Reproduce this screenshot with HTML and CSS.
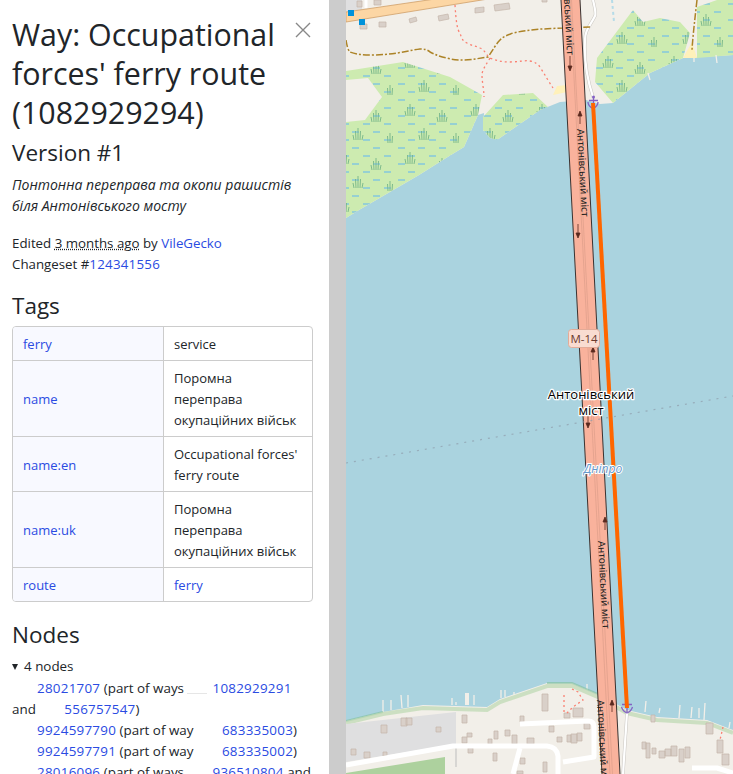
FILE: index.html
```html
<!DOCTYPE html>
<html lang="en">
<head>
<meta charset="utf-8">
<title>Way: Occupational forces' ferry route</title>
<link rel="stylesheet" href="styles.css">
</head>
<body>
<div class="app">
  <aside class="sidebar">
    <header class="head">
      <h1 class="title">Way: Occupational forces' ferry route (1082929294)</h1>
      <button class="close" aria-label="Close">
        <svg width="16" height="16" viewBox="0 0 16 16"><path d="M1 1l14 14M15 1L1 15"/></svg>
      </button>
    </header>
    <h2 class="version">Version #1</h2>
    <p class="comment">Понтонна переправа та окопи рашистів біля Антонівського мосту</p>
    <p class="meta">Edited <abbr class="ago">3 months ago</abbr> by <a href="#">VileGecko</a><br>Changeset #<a class="num" href="#">124341556</a></p>
    <h2 class="section">Tags</h2>
    <table class="tags">
      <tr><th><a href="#">ferry</a></th><td>service</td></tr>
      <tr><th><a href="#">name</a></th><td>Поромна переправа окупаційних військ</td></tr>
      <tr><th><a href="#">name:en</a></th><td>Occupational forces' ferry route</td></tr>
      <tr><th><a href="#">name:uk</a></th><td>Поромна переправа окупаційних військ</td></tr>
      <tr><th><a href="#">route</a></th><td><a href="#">ferry</a></td></tr>
    </table>
    <h2 class="section nodes-h">Nodes</h2>
    <div class="summary"><span class="caret"></span>4 nodes</div>
    <ul class="nodes">
      <li><i class="gap"></i><a class="num" href="#">28021707</a> (part of ways <i class="gap line"></i><a class="num" href="#">1082929291</a> and <i class="gap"></i><a class="num" href="#">556757547</a>)</li>
      <li><i class="gap"></i><a class="num" href="#">9924597790</a> (part of way <i class="gap"></i><a class="num" href="#">683335003</a>)</li>
      <li><i class="gap"></i><a class="num" href="#">9924597791</a> (part of way <i class="gap"></i><a class="num" href="#">683335002</a>)</li>
      <li><i class="gap"></i><a class="num" href="#">28016096</a> (part of ways <i class="gap"></i><a class="num" href="#">936510804</a> and</li>
    </ul>
  </aside>
  <div class="divider"></div>
  <main class="map">
    <svg class="map-svg" viewBox="346 0 387 774" width="387" height="774" aria-label="Map">
      <defs>
        <pattern id="wet" patternUnits="userSpaceOnUse" width="66" height="48">
          <rect width="66" height="48" fill="#cdebb0"/>
          <g class="wet-dash">
            <path d="M2 4h7M22 4h7M43 4h7M12 12h7M33 12h7M54 12h7M2 20h7M22 20h7M43 20h7M12 28h7M33 28h7M54 28h7M2 36h7M22 36h7M43 36h7M12 44h7M33 44h7M54 44h7"/>
          </g>
          <g class="wet-reed">
            <path d="M14 20v-12M12 20l-.5-9M16 20l.5-9M10 20l-1-5M18 20l1-5"/>
            <path d="M46 26v-12M44 26l-.5-9M48 26l.5-9M42 26l-1-5M50 26l1-5"/>
            <path d="M28 44v-12M26 44l-.5-9M30 44l.5-9M24 44l-1-5M32 44l1-5"/>
            <path d="M60 47v-10M58 47l-.5-7M62 47l.5-7"/>
          </g>
        </pattern>
      </defs>

      <rect class="land" x="346" y="0" width="387" height="774"/>
      <path class="water" d="M346 218L359 210L419 175L446 158L464 147L478 115L484 113L483 130L490 138L497 140L540 110L560 102L586 100L600 104L613 103L650 73L683 58L733 55V730L707 720L657 717L627 710L600 695L572 683L547 683L500 699L487 707L423 705L383 712L346 721Z"/>

      <path class="wetland" d="M346 71L403 62L450 77L482 95L478 115L464 147L446 158L419 175L359 210L346 218Z"/>
      <path class="land" d="M346 80L368 78L382 97L365 120L346 122Z"/>
      <path class="wetland" d="M483 117L503 95L533 93L548 107L540 110L497 140L490 138L483 130Z"/>
      <path class="wetland" d="M597 58L633 10L643 22L660 18L680 22L690 33L683 58L650 73L613 103L595 82Z"/>
      <path class="wetland" d="M697 7L717 0H733V55L697 58Z"/>
      <path class="beach" d="M683 58L692 42L697 58ZM553 95L557 86L567 85V92Z"/>

      <g class="pier">
        <path d="M648 73l2 7M694 58v4M716 55l1 8M383 700v12M391 700v10M401 695l1 13M408 695v12M452 698v7M456 702v3M474 695v10M501 690v8M505 690v7M514 692v3M587 684v6M646 701l-1 11M660 708l-1 5M680 705l-1 13M692 707l-1 11M699 708v10M705 703l-1 17M730 722l-1 6"/>
        <path class="pier-thick" d="M467 693v12"/>
      </g>

      <path class="tint" d="M346 721L383 712M547 683L572 683L600 695"/>
      <path class="strand" d="M346 723L383 714L423 708L487 710L500 702L547 686L572 686L600 698L627 713L657 720L707 723L733 733"/>

      <path class="gray" d="M346 724L456 712V744L346 762Z"/>
      <path class="gray-line" d="M456 748V767"/>
      <path class="park" d="M346 773L445 757V774H346Z"/>

      <rect class="gray" x="346" y="0" width="16" height="12"/>
      <path class="road-white" d="M366 0V8"/>

      <g class="bldg">
        <path d="M357 1h5v6h-5ZM374 0h7v5h-7ZM360 24h7v5h-7ZM379 22h7v5h-7ZM409 19l7-2 1 4-7 2ZM438 16l10-2 1 5-10 2ZM475 8l9-1 0 5-9 1ZM494 5l15-2 1 6-15 2ZM542 -2h5v4h-5Z"/>
        <path d="M381 725h6v8h-6ZM401 718h6v8h-6ZM406 718h6v7h-6ZM436 727h5v5h-5ZM462 715h5v8h-5ZM520 716h4v6h-4ZM542 694h6v17h-6ZM564 713h6v5h-6ZM573 708h10v9h-10ZM549 726h5v6h-5ZM584 723h6v6h-6ZM467 733h5v4h-5ZM462 737h5v6h-5ZM494 731h4v8h-4ZM488 739h4v5h-4ZM505 730h5v6h-5ZM512 735h5v9h-5ZM527 738h7v6h-7ZM557 737h5v5h-5ZM567 735h4v7h-4ZM571 734h6v9h-6ZM577 733h5v8h-5ZM351 749h5v6h-5ZM364 752h6v6h-6ZM383 752h4v4h-4ZM468 748h5v5h-5ZM493 753h4v8h-4ZM520 758h5v6h-5ZM543 762h4v10h-4ZM517 771h6v3h-6ZM642 742h4v7h-4ZM646 743h4v15h-4ZM652 748h4v6h-4ZM659 751h6v7h-6ZM665 749h6v7h-6ZM671 746h6v10h-6ZM679 749h5v13h-5ZM685 747h5v11h-5ZM706 723h7v11h-7ZM717 740h6v13h-6ZM722 754h7v11h-7ZM651 715h4v7h-4Z"/>
      </g>

      <g class="road-white">
        <path d="M346 765L453 746H547Q557 747 558 756V774"/>
        <path d="M520 748L513 774"/>
        <path d="M520 724L588 721Q594 721 594 727V757L563 762"/>
        <path d="M692 768H717L733 773"/>
      </g>
      <path class="walk-edge" d="M627 713L623 774"/>
      <path class="walk" d="M627 713L623 774"/>
      <path class="walk-edge" d="M593 0C595 8 596 14 595 16C590 26 585 30 585 40C584 60 586 76 593 97"/>
      <path class="walk" d="M593 0C595 8 596 14 595 16C590 26 585 30 585 40C584 60 586 76 593 97"/>

      <path class="dash-blue" d="M612 0L614 22"/>

      <path class="foot" d="M455 5C456 20 457 30 460 33C462 40 464 42 467 43C472 46 476 46 480 48C485 50 487 56 490 58C497 61 503 62 510 62C518 62 525 60 530 61C535 62 538 64 540 67C545 75 549 82 553 88M490 58C486 65 482 70 482 75C482 82 484 90 484 97M564 695V712M572 689L578 692L583 700L573 707L567 713M723 727L720 740"/>
      <path class="track" d="M346 40C347 46 348 50 350 52C358 55 365 55 373 55C382 55 390 54 397 53C405 52 412 50 420 49C425 49 428 50 430 52C436 55 441 57 447 58C453 60 458 60 463 60C472 60 480 58 488 57C493 50 496 44 500 40C504 36 508 35 513 33C522 31 531 30 540 29C548 29 556 28 563 28L590 27M697 0C695 18 693 34 692 50"/>

      <path class="major" d="M346 12L435 -1H488L346 22Z"/>
      <rect class="poi" x="348" y="10" width="6" height="6"/>
      <rect class="poi" x="359" y="19" width="6" height="6"/>

      <path class="bridge" d="M561 0L602 774H620L580 0Z"/>
      <path class="bridge-mid" d="M570 0L610 774M571.500 0L612.500 774"/>
      <path class="bridge-edge" d="M561 0L602 774M580 0L620 774"/>

      <path class="boundary" d="M346 463L733 396"/>

      <g class="arrow">
        <path d="M570 56V70M570 71l-2-5h4ZM580 112V124M580 111l-2 5h4ZM578 224V236M578 238l-2-5h4ZM593 348V360M593 347l-2 5h4ZM588 415V426M588 428l-2-5h4ZM605 518V530M605 517l-2 5h4ZM612 701V712M612 700l-2 5h4Z"/>
      </g>

      <text class="road-label" transform="translate(564 -1) rotate(86.900)">вський міст</text>
      <text class="road-label" transform="translate(577 129) rotate(86.900)">Антонівський міст</text>
      <text class="road-label" transform="translate(598 541) rotate(86.900)">Антонівський міст</text>
      <text class="road-label" transform="translate(597 700) rotate(86.900)">Антонівський міст</text>

      <g class="anchor">
        <circle cx="593.500" cy="97" r="1.500"/>
        <path d="M593.500 98v6M589 100.500h9M588 102c0 3 2 5 5 6.500 3-1.500 5-3.500 5-6.500"/>
        <path d="M627 703v9M622 704.500h10M621.500 707c1 3 3 5 5.500 6 2.500-1 4.500-3 5.500-6"/>
      </g>
      <path class="ferry" d="M593 103L627 708"/>

      <rect class="shield" x="568.500" y="329.500" width="31" height="18" rx="3"/>
      <text class="shield-text" x="584" y="343" text-anchor="middle">M-14</text>

      <text class="place" x="591" y="399" text-anchor="middle">Антонівський</text>
      <text class="place" x="591" y="415" text-anchor="middle">міст</text>
      <text class="river" x="603" y="473" text-anchor="middle">Дніпро</text>
    </svg>
  </main>
</div>
</body>
</html>
```

FILE: styles.css
```css
* { box-sizing: border-box; }
html, body { margin: 0; height: 100%; overflow: hidden; }
body {
  font-family: "Open Sans", "Noto Sans", sans-serif;
  font-size: 13px;
  line-height: 21px;
  color: #212529;
  background: #fff;
}
a { color: #2a4be2; text-decoration: none; }
.num { letter-spacing: 0.250px; }
.app { display: flex; width: 733px; height: 774px; }
.sidebar { width: 329px; flex: none; padding: 15px 16px 0 12px; overflow: hidden; }
.divider { width: 17px; flex: none; background: #ccc; }
.map { flex: 1; overflow: hidden; }
.map-svg { display: block; }

.head { display: flex; align-items: flex-start; }
.title { flex: 1; margin: 0; font-size: 30.400px; line-height: 39px; font-weight: 400; }
.close { flex: none; width: 18px; height: 18px; margin: 6px 0 0 8px; padding: 0; border: 0; background: none; }
.close svg { display: block; fill: none; stroke: #888; stroke-width: 1.4; }
.version, .section { margin: 0; font-size: 22.500px; line-height: 29px; font-weight: 400; }
.version { margin-top: 6px; }
.comment { margin: 7px 0 17px; font-size: 14px; font-style: italic; }
.meta { margin: 0; font-size: 13.300px; }
.ago { text-decoration: underline dotted; }
.section { margin-top: 16px; }
.tags { width: 301px; margin-top: 6px; border-collapse: separate; border-spacing: 0; border: 1px solid #ccc; border-radius: 4px; table-layout: fixed; }
.tags th, .tags td { padding: 7px 10px 5px; font-weight: 400; text-align: left; border-bottom: 1px solid #ccc; }
.tags tr:last-child th, .tags tr:last-child td { border-bottom: 0; }
.tags th { width: 151px; background: #f8f9ff; border-right: 1px solid #ccc; }
.tags tr:first-child th { border-top-left-radius: 3px; }
.tags tr:last-child th { border-bottom-left-radius: 3px; }
.nodes-h { margin-top: 18px; }
.summary { margin: 7px 0 1px; display: flex; align-items: center; font-size: 13.400px; }
.caret { width: 0; height: 0; margin-right: 6px; border: 3.500px solid transparent; border-top: 6px solid #212529; border-bottom: 0; }
.nodes { margin: 0; padding: 0; list-style: none; font-size: 13.400px; }
.gap { display: inline-block; width: 25px; height: 1px; }
.gap.line { width: 20px; margin: 0 5px 0 0; background: #e6e6e6; vertical-align: -1px; }

.land { fill: #f2efe9; }
.water { fill: #aad3df; }
.wetland { fill: url(#wet); }
.wet-dash path { fill: none; stroke: #5fb5f5; stroke-width: 1.200; }
.wet-reed path { fill: none; stroke: #74b487; stroke-width: 0.900; }
.beach { fill: #fff1ba; }
.pier path { fill: none; stroke: #f2efe9; stroke-width: 1.300; }
.pier .pier-thick { stroke-width: 4; }
.tint { fill: none; stroke: #7fbf9b; stroke-width: 2; opacity: 0.600; }
.strand { fill: none; stroke: #bcd9b0; stroke-width: 4; opacity: 0.700; }
.gray { fill: #dfdfe0; }
.gray-line { fill: none; stroke: #bdbdbd; stroke-width: 1; }
.park { fill: #add19e; }
.bldg path { fill: #d9d0c9; stroke: #c4b6ab; stroke-width: 0.700; }
.road-white { fill: none; stroke: #fff; stroke-width: 3; }
.road-white path { fill: none; stroke: #fff; stroke-width: 5; stroke-linejoin: round; }
.walk-edge { fill: none; stroke: #c9c6c1; stroke-width: 3.200; }
.walk { fill: none; stroke: #fff; stroke-width: 2.200; }
.dash-blue { fill: none; stroke: #b5dbe8; stroke-width: 2; stroke-dasharray: 3 3; }
.foot { fill: none; stroke: #fa8072; stroke-width: 1.300; stroke-dasharray: 2 3; }
.track { fill: none; stroke: #ac8327; stroke-width: 1.500; stroke-dasharray: 7 2 2 2; }
.major { fill: #fcd6a4; stroke: #cfa06a; stroke-width: 0.800; }
.poi { fill: #0092da; }
.bridge { fill: #f9b29c; }
.bridge-edge { fill: none; stroke: #3a3230; stroke-width: 1; }
.bridge-mid { fill: none; stroke: #d99a86; stroke-width: 0.600; }
.boundary { fill: none; stroke: #8f9dab; stroke-width: 1.200; stroke-dasharray: 2 6; opacity: 0.700; }
.arrow path { fill: #5a2a1e; stroke: #5a2a1e; stroke-width: 0.800; }
.road-label { font: 10px "Noto Sans", sans-serif; fill: #222; }
.ferry { fill: none; stroke: #ff6600; stroke-width: 4; }
.anchor circle { fill: #8461c4; }
.anchor path { fill: none; stroke: #8461c4; stroke-width: 1.300; }
.shield { fill: #f9dcd1; stroke: #e3ab98; stroke-width: 1; }
.shield-text { font: 11.500px "Open Sans", sans-serif; fill: #6a3a2e; }
.place { font: 13px "Open Sans", sans-serif; fill: #000; stroke: #fff; stroke-width: 2.500px; paint-order: stroke; stroke-linejoin: round; }
.river { font: italic 12px "Open Sans", sans-serif; fill: #6699cc; stroke: #fff; stroke-width: 2px; paint-order: stroke; stroke-linejoin: round; }
```
